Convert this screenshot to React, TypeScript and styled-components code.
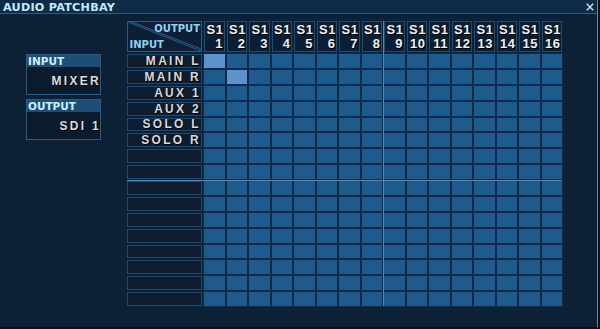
import React from 'react';
import styled, { createGlobalStyle } from 'styled-components';

const Global = createGlobalStyle`
  html, body { margin: 0; padding: 0; background: #08141f; }
  body { width: 600px; height: 329px; overflow: hidden; }
  #root { width: 600px; height: 329px; }
  * { box-sizing: border-box; }
`;

const Window = styled.div`
  width: 598px;
  height: 328px;
  background: #0c2036;
  border-right: 1px solid #6d8399;
  border-bottom: 1px solid #050e18;
  display: flex;
  flex-direction: column;
  font-family: "DejaVu Sans", "Liberation Sans", sans-serif;
`;

const TitleBar = styled.div`
  height: 14px;
  flex: none;
  display: flex;
  align-items: center;
  justify-content: space-between;
  padding: 0 3px 0 3px;
  background: #0f2c47;
  border-bottom: 1px solid #2e5d83;
`;

const Title = styled.span`
  font-family: "DejaVu Sans", sans-serif;
  font-weight: 700;
  font-size: 11.2px;
  letter-spacing: 0.25px;
  line-height: 12px;
  padding-top: 3px;
  color: #c2e9f8;
  white-space: nowrap;
`;

const Close = styled.svg`
  width: 8px;
  height: 8px;
  display: block;
  margin-top: 1px;
`;

const Body = styled.div`
  flex: 1;
  display: flex;
  align-items: flex-start;
  gap: 26px;
  padding: 7px 0 0 26px;
`;

const Sidebar = styled.div`
  width: 75px;
  margin-top: 33px;
  display: flex;
  flex-direction: column;
  gap: 4px;
`;

const Panel = styled.div`
  border: 1px solid #2a5a81;
  background: #0b1a2c;
  display: flex;
  flex-direction: column;
`;

const PanelHeader = styled.div`
  height: 12px;
  background: #1d4e77;
  color: #cdeefa;
  font-weight: bold;
  font-size: 10.5px;
  line-height: 12px;
  padding-left: 1px;
`;

const PanelValue = styled.div`
  height: 27px;
  display: flex;
  align-items: center;
  justify-content: flex-end;
  font-family: "Liberation Sans", sans-serif;
  font-weight: bold;
  font-size: 12px;
  letter-spacing: 2.3px;
  color: #dcdcdc;
  text-shadow: 1px 1px 0 #000;
  padding-top: 1px;
  margin-right: -1px;
`;

const Matrix = styled.div`
  width: 435px;
  height: 285px;
  display: grid;
  grid-template-columns: 75px repeat(16, minmax(0, 1fr));
  grid-template-rows: 31px repeat(16, minmax(0, 1fr));
  gap: 2px;
`;

const Corner = styled.div`
  grid-row: 1;
  grid-column: 1;
  position: relative;
  border: 1px solid #2a5a81;
  background: #0d1f35;
  display: flex;
  flex-direction: column;
  justify-content: space-between;
  padding: 1px 1px 0 1.5px;
  font-weight: bold;
  font-size: 10px;
  line-height: 12px;
  color: #8fd2f0;
`;

const CornerLines = styled.svg`
  position: absolute;
  inset: 0;
  width: 100%;
  height: 100%;
`;

const CornerOut = styled.span`
  align-self: flex-end;
  position: relative;
`;

const CornerIn = styled.span`
  align-self: flex-start;
  position: relative;
`;

const ColHead = styled.div<{ $col: number }>`
  grid-row: 1;
  grid-column: ${(p) => p.$col};
  border: 1px solid #1f4c74;
  background: #0c1e33;
  padding: 1px 1px 0 1.5px;
  display: flex;
  flex-direction: column;
  font-family: "Liberation Sans", sans-serif;
  font-weight: bold;
  font-size: 13px;
  line-height: 14px;
  letter-spacing: 0.5px;
  color: #f0f0f0;
  text-shadow: 1px 1px 0 #000;
  white-space: nowrap;
  overflow: hidden;
`;

const ColNum = styled.span`
  align-self: flex-end;
  margin-right: -0.5px;
`;

const RowLabel = styled.div<{ $row: number }>`
  grid-row: ${(p) => p.$row};
  grid-column: 1;
  border: 1px solid #1f4b72;
  background: #0d1c2f;
  display: flex;
  align-items: center;
  justify-content: flex-end;
  overflow: hidden;
  font-family: "Liberation Sans", sans-serif;
  font-weight: bold;
  font-size: 12px;
  line-height: 12px;
  letter-spacing: 2.3px;
  color: #d8d8d8;
  text-shadow: 1px 1px 0 #000;
  white-space: nowrap;
`;

const Cell = styled.div<{ $row: number; $col: number; $on?: boolean }>`
  grid-row: ${(p) => p.$row};
  grid-column: ${(p) => p.$col};
  background: ${(p) => (p.$on ? '#5c93c8' : '#1e5a8b')};
  box-shadow: 0 0 0 1px #0f2b49;
`;

const VDivider = styled.div`
  grid-row: 1 / -1;
  grid-column: 10;
  justify-self: start;
  width: 1px;
  margin-left: -1px;
  background: #5a85ad;
  z-index: 2;
`;

const HDivider = styled.div`
  grid-row: 10;
  grid-column: 1 / -1;
  align-self: start;
  height: 1px;
  margin-top: -1px;
  background: #5a85ad;
  z-index: 2;
`;

const labels = ['MAIN L', 'MAIN R', 'AUX 1', 'AUX 2', 'SOLO L', 'SOLO R', '', '', '', '', '', '', '', '', '', ''];
const outputs = Array.from({ length: 16 }, (_, i) => i + 1);
const active = new Set(['0-0', '1-1']);

export default function App() {
  return (
    <>
      <Global />
      <Window>
        <TitleBar>
          <Title>AUDIO PATCHBAY</Title>
          <Close viewBox="0 0 8 8">
            <path d="M0.8 0.8 L7.2 7.2 M7.2 0.8 L0.8 7.2" stroke="#bfe6f5" strokeWidth="1.4" fill="none" />
          </Close>
        </TitleBar>
        <Body>
          <Sidebar>
            <Panel>
              <PanelHeader>INPUT</PanelHeader>
              <PanelValue>MIXER</PanelValue>
            </Panel>
            <Panel>
              <PanelHeader>OUTPUT</PanelHeader>
              <PanelValue>SDI 1</PanelValue>
            </Panel>
          </Sidebar>
          <Matrix>
            <Corner>
              <CornerLines viewBox="0 0 73 29" preserveAspectRatio="none">
                <line x1="0" y1="0" x2="73" y2="29" stroke="#2e5f88" strokeWidth="1" vectorEffect="non-scaling-stroke" />
                <line x1="4" y1="0" x2="73" y2="27" stroke="#2e5f88" strokeWidth="1" vectorEffect="non-scaling-stroke" />
              </CornerLines>
              <CornerOut>OUTPUT</CornerOut>
              <CornerIn>INPUT</CornerIn>
            </Corner>
            {outputs.map((n) => (
              <ColHead key={n} $col={n + 1}>
                <span>S1</span>
                <ColNum>{n}</ColNum>
              </ColHead>
            ))}
            {labels.map((l, r) => (
              <RowLabel key={'l' + r} $row={r + 2}>
                {l}
              </RowLabel>
            ))}
            {labels.map((_, r) =>
              outputs.map((_, c) => (
                <Cell key={r + '-' + c} $row={r + 2} $col={c + 2} $on={active.has(r + '-' + c)} />
              ))
            )}
            <VDivider />
            <HDivider />
          </Matrix>
        </Body>
      </Window>
    </>
  );
}
